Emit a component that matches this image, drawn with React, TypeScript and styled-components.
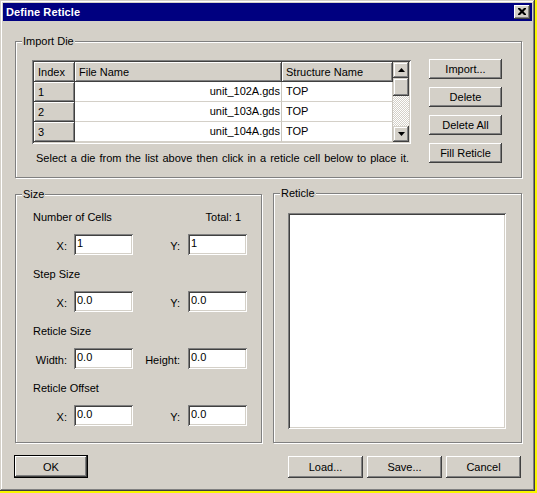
import React from "react";
import styled, { createGlobalStyle } from "styled-components";

const Global = createGlobalStyle`
  html, body { margin: 0; padding: 0; }
  body {
    background: #f8f800;
    font-family: "Liberation Sans", Arial, sans-serif;
    font-size: 11px;
    color: #000;
  }
  * { box-sizing: border-box; }
`;

const Window = styled.div`
  width: 535px;
  height: 491px;
  background: #d4d0c8;
  box-shadow: inset -1px -1px #404040, inset 1px 1px #d4d0c8,
    inset -2px -2px #808080, inset 2px 2px #ffffff;
  display: flex;
  flex-direction: column;
`;

const TitleBar = styled.div`
  margin: 3px 3px 0 3px;
  height: 18px;
  background: #000080;
  display: flex;
  align-items: center;
  justify-content: space-between;
  padding: 0 2px 0 3px;
`;

const Title = styled.span`
  color: #fff;
  font-weight: bold;
  font-size: 11px;
  letter-spacing: 0.1px;
`;

const CloseBtn = styled.div`
  width: 16px;
  height: 14px;
  background: #d4d0c8;
  box-shadow: inset -1px -1px #404040, inset 1px 1px #ffffff,
    inset -2px -2px #808080;
  display: flex;
  align-items: center;
  justify-content: center;
  padding-bottom: 1px;
`;

const Body = styled.div`
  padding: 20px 13px 0 15px;
  display: flex;
  flex-direction: column;
`;

const Group = styled.div<{ $w?: number; $h: number; $mt?: number }>`
  position: relative;
  width: ${(p) => (p.$w ? `${p.$w}px` : "auto")};
  height: ${(p) => p.$h}px;
  margin-top: ${(p) => p.$mt ?? 0}px;
  border: 1px solid #808080;
  box-shadow: inset 1px 1px #ffffff, 1px 1px #ffffff;
`;

const GroupLabel = styled.span`
  position: absolute;
  top: -8px;
  left: 6px;
  padding: 0 1px;
  line-height: 14px;
  background: #d4d0c8;
`;

const ImportInner = styled.div`
  display: flex;
  padding: 18px 0 0 16px;
`;

const LeftCol = styled.div`
  display: flex;
  flex-direction: column;
`;

const ListBox = styled.div`
  width: 379px;
  height: 84px;
  padding: 2px;
  background: #ffffff;
  box-shadow: inset 1px 1px #808080, inset -1px -1px #ffffff,
    inset 2px 2px #404040, inset -2px -2px #d4d0c8;
  display: flex;
`;

const Grid = styled.div`
  display: grid;
  grid-template-columns: 41px 207px 111px;
  grid-auto-rows: 20px;
  overflow: hidden;
`;

const HeadCell = styled.div`
  background: #d4d0c8;
  box-shadow: inset -1px -1px #404040, inset 1px 1px #ffffff,
    inset -2px -2px #808080;
  padding-left: 4px;
  line-height: 20px;
  white-space: nowrap;
  overflow: hidden;
`;

const RowHead = styled.div`
  background: #d4d0c8;
  box-shadow: inset -1px -1px #404040, inset 1px 1px #ffffff,
    inset -2px -2px #808080;
  padding-left: 4px;
  line-height: 20px;
`;

const Cell = styled.div<{ $right?: boolean }>`
  background: #ffffff;
  border-right: 1px solid #c8c4bc;
  border-bottom: 1px solid #d4d0c8;
  line-height: 19px;
  white-space: nowrap;
  overflow: hidden;
  text-align: ${(p) => (p.$right ? "right" : "left")};
  padding: ${(p) => (p.$right ? "0 1px 0 0" : "0 0 0 4px")};
`;

const ScrollBar = styled.div`
  width: 16px;
  display: flex;
  flex-direction: column;
`;

const ScrollBtn = styled.div<{ $h: number }>`
  height: ${(p) => p.$h}px;
  background: #d4d0c8;
  box-shadow: inset -1px -1px #404040, inset 1px 1px #d4d0c8,
    inset -2px -2px #808080, inset 2px 2px #ffffff;
  display: flex;
  align-items: center;
  justify-content: center;
`;

const Track = styled.div`
  flex: 1;
  background: repeating-conic-gradient(#ffffff 0 25%, #d4d0c8 0 50%) 0 0 / 2px
    2px;
`;

const Hint = styled.div`
  margin-top: 8px;
  padding-left: 4px;
  line-height: 13px;
  white-space: nowrap;
  word-spacing: 1px;
`;

const ButtonCol = styled.div`
  margin: -1px 0 0 18px;
  display: flex;
  flex-direction: column;
  gap: 8px;
`;

const Button = styled.div<{ $w: number; $h: number; $default?: boolean }>`
  width: ${(p) => p.$w}px;
  height: ${(p) => p.$h}px;
  background: #d4d0c8;
  border: ${(p) => (p.$default ? "1px solid #000" : "none")};
  box-shadow: inset -1px -1px #404040, inset 1px 1px #ffffff,
    inset -2px -2px #808080;
  display: flex;
  align-items: center;
  justify-content: center;
  white-space: nowrap;
`;

const MidRow = styled.div`
  display: flex;
  gap: 11px;
  margin-top: 16px;
`;

const SizeInner = styled.div`
  padding-top: 15px;
  display: flex;
  flex-direction: column;
  gap: 12px;
`;

const Section = styled.div`
  display: flex;
  flex-direction: column;
`;

const Heading = styled.div`
  height: 14px;
  line-height: 14px;
  margin-bottom: 10px;
  padding: 0 20px 0 17px;
  display: flex;
  justify-content: space-between;
`;

const FieldRow = styled.div`
  display: grid;
  grid-template-columns: 58px 59px 55px 59px;
  height: 21px;
  align-items: center;
`;

const FieldLabel = styled.span<{ $pr: number }>`
  text-align: right;
  padding-right: ${(p) => p.$pr}px;
  padding-top: 2px;
`;

const Input = styled.div`
  height: 21px;
  background: #ffffff;
  box-shadow: inset 1px 1px #808080, inset -1px -1px #ffffff,
    inset 2px 2px #404040, inset -2px -2px #d4d0c8;
  padding: 0 3px;
  line-height: 18px;
`;

const Canvas = styled.div`
  margin: 19px 15px 0 14px;
  height: 216px;
  background: #ffffff;
  box-shadow: inset 1px 1px #808080, inset -1px -1px #ffffff,
    inset 2px 2px #404040, inset -2px -2px #d4d0c8;
`;

const BottomRow = styled.div`
  margin-top: 12px;
  display: flex;
  justify-content: space-between;
  align-items: center;
`;

const OkWrap = styled.div`
  margin-left: -1px;
`;

const RightBtns = styled.div`
  display: flex;
  gap: 4px;
  margin-right: 1px;
`;

const Arrow = ({ down }: { down?: boolean }) => (
  <svg width="7" height="4" viewBox="0 0 7 4">
    <polygon
      points={down ? "0,0 7,0 3.5,4" : "3.5,0 7,4 0,4"}
      fill="#000"
    />
  </svg>
);

const files = [
  ["1", "unit_102A.gds", "TOP"],
  ["2", "unit_103A.gds", "TOP"],
  ["3", "unit_104A.gds", "TOP"],
];

const sections: { title: string; total?: string; l1: string; l2: string; v1: string; v2: string }[] = [
  { title: "Number of Cells", total: "Total: 1", l1: "X:", l2: "Y:", v1: "1", v2: "1" },
  { title: "Step Size", l1: "X:", l2: "Y:", v1: "0.0", v2: "0.0" },
  { title: "Reticle Size", l1: "Width:", l2: "Height:", v1: "0.0", v2: "0.0" },
  { title: "Reticle Offset", l1: "X:", l2: "Y:", v1: "0.0", v2: "0.0" },
];

export default function App() {
  return (
    <>
      <Global />
      <Window>
        <TitleBar>
          <Title>Define Reticle</Title>
          <CloseBtn>
            <svg width="8" height="7" viewBox="0 0 8 7">
              <path
                d="M0 0h2l2 2 2-2h2v1L5.5 3.5 8 6v1H6L4 5 2 7H0V6l2.5-2.5L0 1z"
                fill="#000"
              />
            </svg>
          </CloseBtn>
        </TitleBar>
        <Body>
          <Group $h={137}>
            <GroupLabel>Import Die</GroupLabel>
            <ImportInner>
              <LeftCol>
                <ListBox>
                  <Grid>
                    <HeadCell>Index</HeadCell>
                    <HeadCell>File Name</HeadCell>
                    <HeadCell>Structure Name</HeadCell>
                    {files.map(([i, f, s]) => (
                      <React.Fragment key={i}>
                        <RowHead>{i}</RowHead>
                        <Cell $right>{f}</Cell>
                        <Cell>{s}</Cell>
                      </React.Fragment>
                    ))}
                  </Grid>
                  <ScrollBar>
                    <ScrollBtn $h={16}>
                      <Arrow />
                    </ScrollBtn>
                    <ScrollBtn $h={18} />
                    <Track />
                    <ScrollBtn $h={16}>
                      <Arrow down />
                    </ScrollBtn>
                  </ScrollBar>
                </ListBox>
                <Hint>
                  Select a die from the list above then click in a reticle cell
                  below to place it.
                </Hint>
              </LeftCol>
              <ButtonCol>
                <Button $w={73} $h={20}>Import...</Button>
                <Button $w={73} $h={20}>Delete</Button>
                <Button $w={73} $h={20}>Delete All</Button>
                <Button $w={73} $h={20}>Fill Reticle</Button>
              </ButtonCol>
            </ImportInner>
          </Group>
          <MidRow>
            <Group $w={247} $h={249}>
              <GroupLabel>Size</GroupLabel>
              <SizeInner>
                {sections.map((s) => (
                  <Section key={s.title}>
                    <Heading>
                      <span>{s.title}</span>
                      {s.total && <span>{s.total}</span>}
                    </Heading>
                    <FieldRow>
                      <FieldLabel $pr={7}>{s.l1}</FieldLabel>
                      <Input>{s.v1}</Input>
                      <FieldLabel $pr={8}>{s.l2}</FieldLabel>
                      <Input>{s.v2}</Input>
                    </FieldRow>
                  </Section>
                ))}
              </SizeInner>
            </Group>
            <Group $w={249} $h={250} $mt={-1}>
              <GroupLabel>Reticle</GroupLabel>
              <Canvas />
            </Group>
          </MidRow>
          <BottomRow>
            <OkWrap>
              <Button $w={74} $h={23} $default>
                OK
              </Button>
            </OkWrap>
            <RightBtns>
              <Button $w={75} $h={22}>Load...</Button>
              <Button $w={75} $h={22}>Save...</Button>
              <Button $w={75} $h={22}>Cancel</Button>
            </RightBtns>
          </BottomRow>
        </Body>
      </Window>
    </>
  );
}
